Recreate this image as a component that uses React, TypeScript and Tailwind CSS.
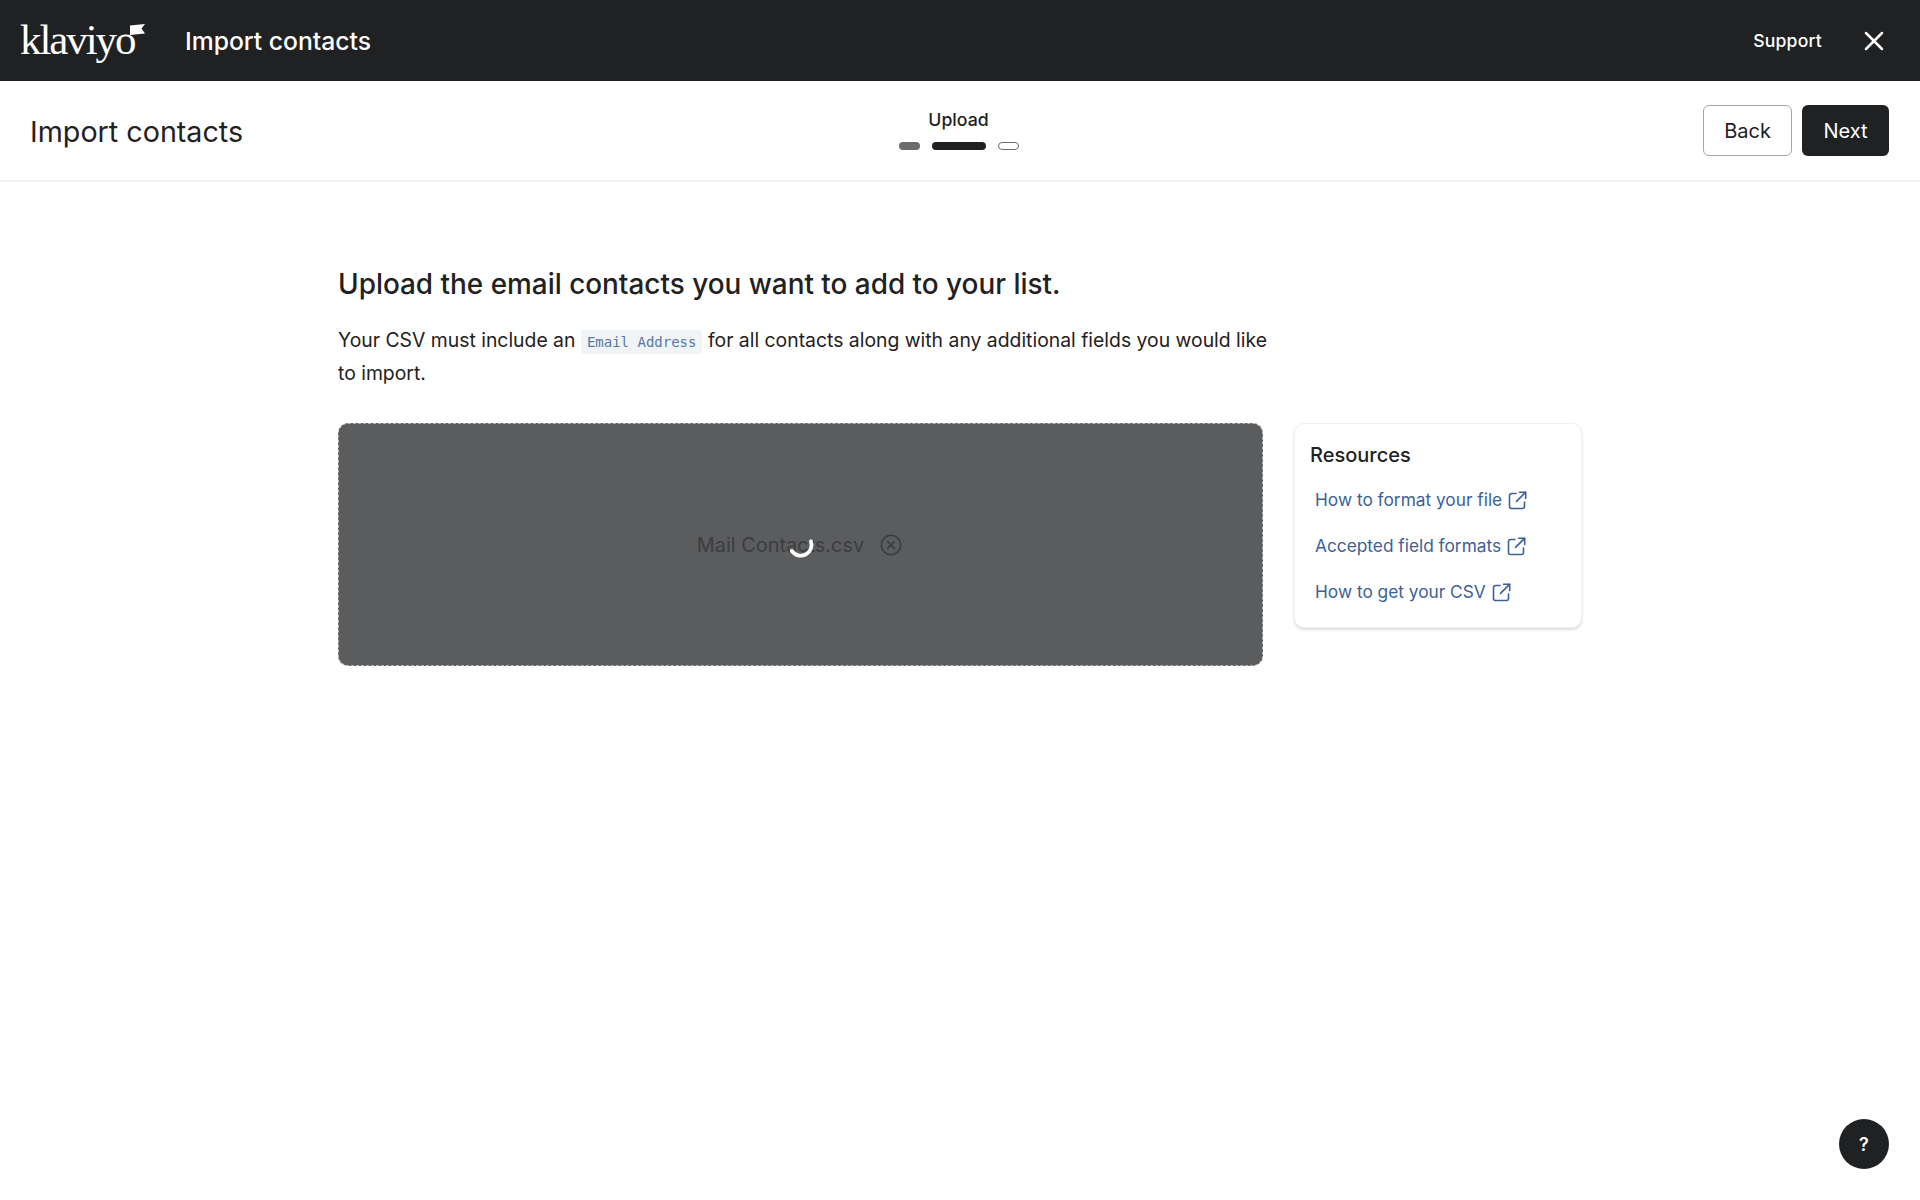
import React from "react";
import { X } from "lucide-react";

function ExtIcon() {
  return (
    <svg width="19" height="19" viewBox="0 0 19 19" fill="none" stroke="#3b6197" strokeWidth="1.6" strokeLinecap="round" strokeLinejoin="round" className="shrink-0">
      <path d="M8 2.5H3.5a2 2 0 0 0-2 2v11a2 2 0 0 0 2 2h11a2 2 0 0 0 2-2V11" />
      <path d="M11.5 1.2h6.2v6.2" />
      <path d="M17.5 1.4 8.5 10.4" />
    </svg>
  );
}

function ResLink({ label }: { label: string }) {
  return (
    <div className="flex items-center h-[24px] gap-[6px] pl-[5px] text-[17.3px] leading-[24px] text-[#3b6197]">
      <span>{label}</span>
      <ExtIcon />
    </div>
  );
}

export default function App() {
  return (
    <div className="relative min-h-[1200px] w-full bg-white text-[#1f2123]" style={{ fontFamily: "Inter, sans-serif" }}>
      <header className="flex h-[81px] items-center justify-between bg-[#1f2123] pl-[20px] pr-[30px] text-white">
        <div className="flex items-center">
          <div className="relative flex h-[60px] w-[165px] items-center">
            <span className="text-[43px] leading-none tracking-[-2.1px] pb-[3px]" style={{ fontFamily: '"Liberation Serif", serif' }}>klaviyo</span>
            <svg width="15" height="12" viewBox="0 0 15 12" className="absolute left-[110px] top-[13px]">
              <path d="M0 1.5 15 0 11.5 4.5 15 9.5 0 11Z" fill="#fff" />
            </svg>
          </div>
          <span className="text-[24.7px] font-medium leading-[32px]">Import contacts</span>
        </div>
        <div className="flex items-center gap-[36px]">
          <span className="text-[17.6px] font-medium leading-[24px] tracking-[0.2px]">Support</span>
          <X size={32} strokeWidth={1.9} />
        </div>
      </header>

      <div className="flex h-[101px] items-center border-b-2 border-[#f1f1f1] pl-[30px] pr-[31px]">
        <div className="flex-1 text-[28.7px] leading-[36px] pt-[2px]">Import contacts</div>
        <div className="mr-[2px] flex flex-col items-center pb-[2px]">
          <div className="text-[17.7px] font-medium leading-[22px] mb-[11px]">Upload</div>
          <div className="flex items-center gap-[12px]">
            <div className="h-[8px] w-[21px] rounded-full bg-[#6b6c6d]" />
            <div className="h-[8px] w-[54px] rounded-full bg-[#1f2123]" />
            <div className="h-[8px] w-[21px] rounded-full border border-[#6b6c6d] bg-white" />
          </div>
        </div>
        <div className="flex flex-1 justify-end gap-[10px]">
          <button className="h-[51px] w-[89px] rounded-[6px] border border-[#a3a5a6] bg-white text-[20px] leading-[28px] pt-[1px]">Back</button>
          <button className="h-[51px] w-[87px] rounded-[6px] bg-[#1f2123] text-[20px] leading-[28px] pt-[1px] text-white">Next</button>
        </div>
      </div>

      <main className="pl-[338px] pt-[83px]">
        <h1 className="text-[27.9px] font-medium leading-[38px]">Upload the email contacts you want to add to your list.</h1>
        <p className="mt-[21px] w-[945px] text-[19.37px] leading-[33px]">
          Your CSV must include an{" "}
          <code className="rounded-[3px] bg-[#f1f4f7] px-[6px] py-[4px] leading-none text-[#5578a8]" style={{ fontFamily: '"DejaVu Sans Mono", monospace', fontSize: "14px" }}>Email Address</code>{" "}
          for all contacts along with any additional fields you would like to import.
        </p>
        <div className="mt-[33px] flex items-start gap-[31px]">
          <div className="relative flex h-[243px] w-[925px] items-center justify-center rounded-[10px] border border-dashed border-[#b4b4b4] bg-[#5b5c5e]">
            <div className="mr-[2px] flex items-center gap-[16px] pt-[2px] text-[19.9px] text-[#3c3d3f]">
              <span>Mail Contacts.csv</span>
              <svg width="22" height="22" viewBox="0 0 22 22" fill="none" stroke="#3c3d3f" strokeWidth="1.6" strokeLinecap="round">
                <circle cx="11" cy="11" r="9.7" />
                <path d="M7.6 7.6l6.8 6.8M14.4 7.6l-6.8 6.8" />
              </svg>
            </div>
            <svg width="28" height="28" viewBox="0 0 26 26" fill="none" className="absolute left-[448px] top-[107px]">
              <path d="M22.2 9.5A10 10 0 0 1 4.5 18.5" stroke="#fff" strokeWidth="3.5" strokeLinecap="round" />
            </svg>
          </div>
          <aside className="h-[205px] w-[288px] rounded-[10px] border border-[#f0f0f0] bg-white pl-[15px] pt-[18px] shadow-[0_2px_3px_rgba(0,0,0,0.14)]">
            <div className="text-[20px] font-medium leading-[26px]">Resources</div>
            <div className="mt-[20px] flex flex-col gap-[22px]">
              <ResLink label="How to format your file" />
              <ResLink label="Accepted field formats" />
              <ResLink label="How to get your CSV" />
            </div>
          </aside>
        </div>
      </main>

      <div className="absolute left-[1839px] top-[1119px] flex h-[50px] w-[50px] items-center justify-center rounded-full bg-[#1f2123] text-[18px] font-semibold text-white">?</div>
    </div>
  );
}
